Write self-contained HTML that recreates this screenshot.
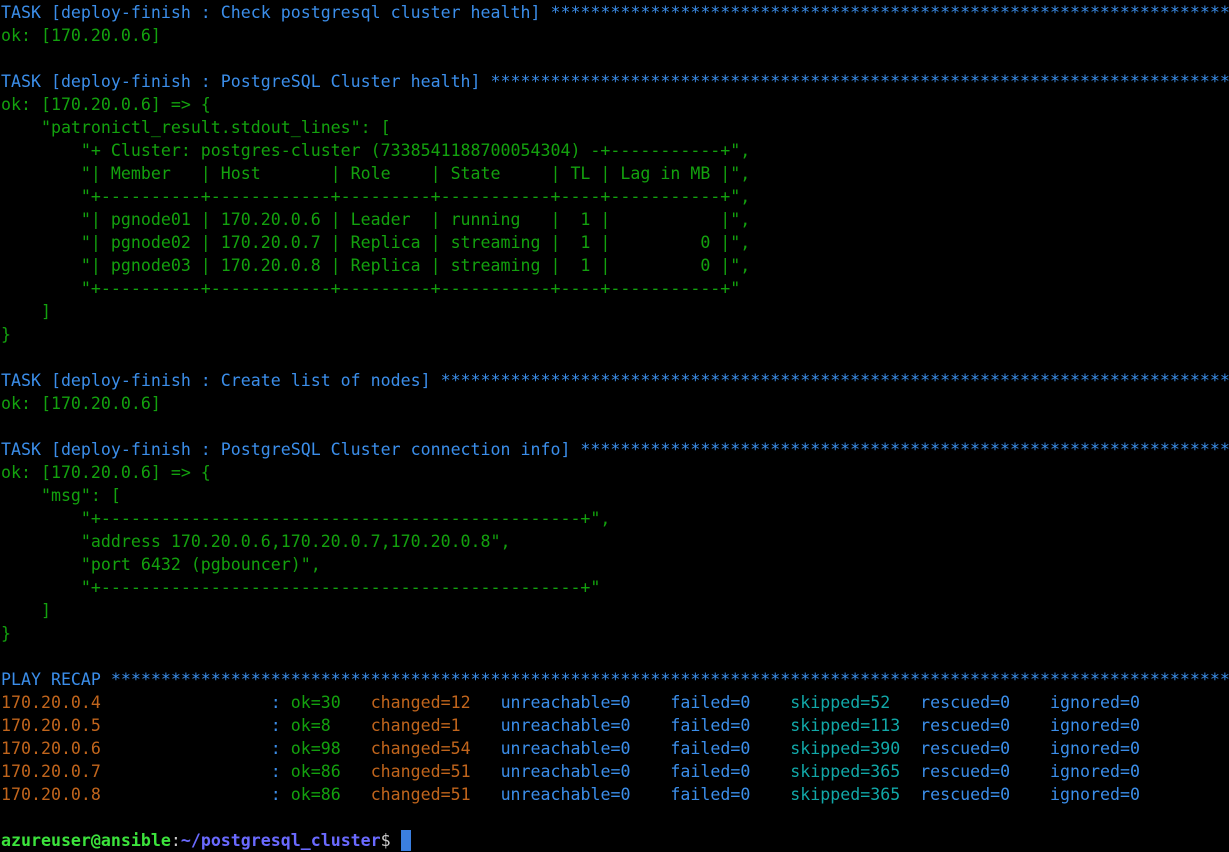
<!DOCTYPE html>
<html><head><meta charset="utf-8">
<style>
html,body{margin:0;padding:0;background:#000;width:1229px;height:852px;overflow:hidden}
pre{margin:0;padding:1px 0 0 1px;font-family:"DejaVu Sans Mono","Liberation Mono",monospace;font-size:16.6px;line-height:23px;color:#13a10e;white-space:pre;overflow:hidden;width:1229px}
.b{color:#3b8eea}.g{color:#13a10e}.o{color:#c1651c}.c{color:#11a8a8}
.pg{color:#3ce33c;font-weight:bold}.pp{color:#6a6aff;font-weight:bold}
.cur{display:inline-block;width:10px;height:21px;background:#3b7fe0;vertical-align:-5px}
</style></head><body>
<pre><span class="b">TASK [deploy-finish : Check postgresql cluster health] **********************************************************************</span>
ok: [170.20.0.6]

<span class="b">TASK [deploy-finish : PostgreSQL Cluster health] ****************************************************************************</span>
ok: [170.20.0.6] =&gt; {
    "patronictl_result.stdout_lines": [
        "+ Cluster: postgres-cluster (7338541188700054304) -+-----------+",
        "| Member   | Host       | Role    | State     | TL | Lag in MB |",
        "+----------+------------+---------+-----------+----+-----------+",
        "| pgnode01 | 170.20.0.6 | Leader  | running   |  1 |           |",
        "| pgnode02 | 170.20.0.7 | Replica | streaming |  1 |         0 |",
        "| pgnode03 | 170.20.0.8 | Replica | streaming |  1 |         0 |",
        "+----------+------------+---------+-----------+----+-----------+"
    ]
}

<span class="b">TASK [deploy-finish : Create list of nodes] *********************************************************************************</span>
ok: [170.20.0.6]

<span class="b">TASK [deploy-finish : PostgreSQL Cluster connection info] *******************************************************************</span>
ok: [170.20.0.6] =&gt; {
    "msg": [
        "+------------------------------------------------+",
        "address 170.20.0.6,170.20.0.7,170.20.0.8",
        "port 6432 (pgbouncer)",
        "+------------------------------------------------+"
    ]
}

<span class="b">PLAY RECAP ******************************************************************************************************************</span>
<span class="o">170.20.0.4</span>                 <span class="b">:</span> <span class="g">ok=30   </span><span class="o">changed=12   </span><span class="b">unreachable=0    </span><span class="b">failed=0    </span><span class="c">skipped=52   </span><span class="b">rescued=0    </span><span class="b">ignored=0</span>
<span class="o">170.20.0.5</span>                 <span class="b">:</span> <span class="g">ok=8    </span><span class="o">changed=1    </span><span class="b">unreachable=0    </span><span class="b">failed=0    </span><span class="c">skipped=113  </span><span class="b">rescued=0    </span><span class="b">ignored=0</span>
<span class="o">170.20.0.6</span>                 <span class="b">:</span> <span class="g">ok=98   </span><span class="o">changed=54   </span><span class="b">unreachable=0    </span><span class="b">failed=0    </span><span class="c">skipped=390  </span><span class="b">rescued=0    </span><span class="b">ignored=0</span>
<span class="o">170.20.0.7</span>                 <span class="b">:</span> <span class="g">ok=86   </span><span class="o">changed=51   </span><span class="b">unreachable=0    </span><span class="b">failed=0    </span><span class="c">skipped=365  </span><span class="b">rescued=0    </span><span class="b">ignored=0</span>
<span class="o">170.20.0.8</span>                 <span class="b">:</span> <span class="g">ok=86   </span><span class="o">changed=51   </span><span class="b">unreachable=0    </span><span class="b">failed=0    </span><span class="c">skipped=365  </span><span class="b">rescued=0    </span><span class="b">ignored=0</span>

<span class="pg">azureuser@ansible</span><span style="color:#ccc">:</span><span class="pp">~/postgresql_cluster</span><span style="color:#ccc">$ </span><span class="cur"></span></pre>
</body></html>
